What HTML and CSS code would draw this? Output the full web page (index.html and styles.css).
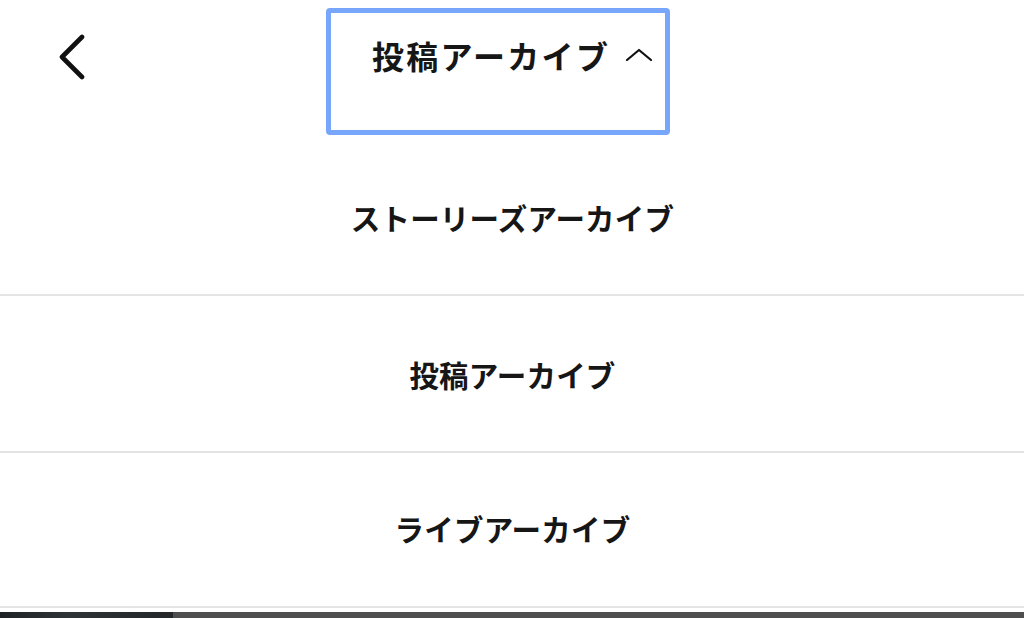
FILE: index.html
```html
<!DOCTYPE html>
<html lang="ja">
<head>
<meta charset="utf-8">
<link rel="stylesheet" href="styles.css">
</head>
<body>
<div class="page">
  <header class="header">
    <button class="back" aria-label="戻る">
      <svg width="30" height="46" viewBox="0 0 30 46"><polyline points="24,3 4,23 24,43" fill="none" stroke="#111" stroke-width="4.6" stroke-linecap="round" stroke-linejoin="round"/></svg>
    </button>
    <button class="title-btn">
      <span class="title">投稿アーカイブ</span>
      <svg class="caret" width="28" height="14" viewBox="0 0 28 14"><polyline points="2,12 14,2 26,12" fill="none" stroke="#111" stroke-width="2.2" stroke-linecap="round" stroke-linejoin="round"/></svg>
    </button>
  </header>
  <ul class="menu">
    <li class="item">ストーリーズアーカイブ</li>
    <li class="item">投稿アーカイブ</li>
    <li class="item">ライブアーカイブ</li>
  </ul>
  <div class="spacer"></div>
  <div class="bottom-bar"><div class="bottom-dark"></div></div>
</div>
</body>
</html>
```

FILE: styles.css
```css
* { box-sizing: border-box; }
html, body { margin: 0; padding: 0; background: #fff; }
body {
  font-family: "Noto Sans CJK JP", "Noto Sans", sans-serif;
  color: #161616;
  width: 1024px;
  height: 618px;
  overflow: hidden;
}
.page { display: flex; flex-direction: column; height: 618px; }
.header {
  height: 140px;
  display: flex;
  align-items: flex-start;
  flex-shrink: 0;
}
.back {
  margin: 34px 0 0 58px;
  padding: 0;
  border: 0;
  background: none;
  width: 30px;
  height: 46px;
  display: flex;
}
.title-btn {
  margin: 8px 0 0 238px;
  width: 344px;
  height: 127px;
  border: 5px solid #78a6fa;
  border-radius: 4px;
  background: #fff;
  padding: 21px 0 0 41px;
  display: flex;
  align-items: flex-start;
  font-family: inherit;
}
.title {
  font-size: 32px;
  font-weight: 700;
  letter-spacing: 2.3px;
  line-height: 42px;
  color: #161616;
  white-space: nowrap;
}
.caret { margin: 14px 0 0 15px; flex-shrink: 0; }
.menu { list-style: none; margin: 0; padding: 0; }
.item {
  height: 157px;
  border-bottom: 2px solid #e4e4e4;
  display: flex;
  align-items: center;
  justify-content: center;
  font-size: 29.5px;
  font-weight: 700;
  letter-spacing: 0.2px;
  padding-left: 1px;
  color: #161616;
}
.item:first-child { height: 156px; }
.item:last-child { height: 155px; padding-bottom: 3px; }
.spacer { height: 4px; flex-shrink: 0; }
.bottom-bar {
  flex: 1;
  background: #4e4e4e;
  display: flex;
}
.bottom-dark {
  width: 173px;
  background: linear-gradient(90deg, #1f2326, #2e3336 40%, #23272a);
}
```
